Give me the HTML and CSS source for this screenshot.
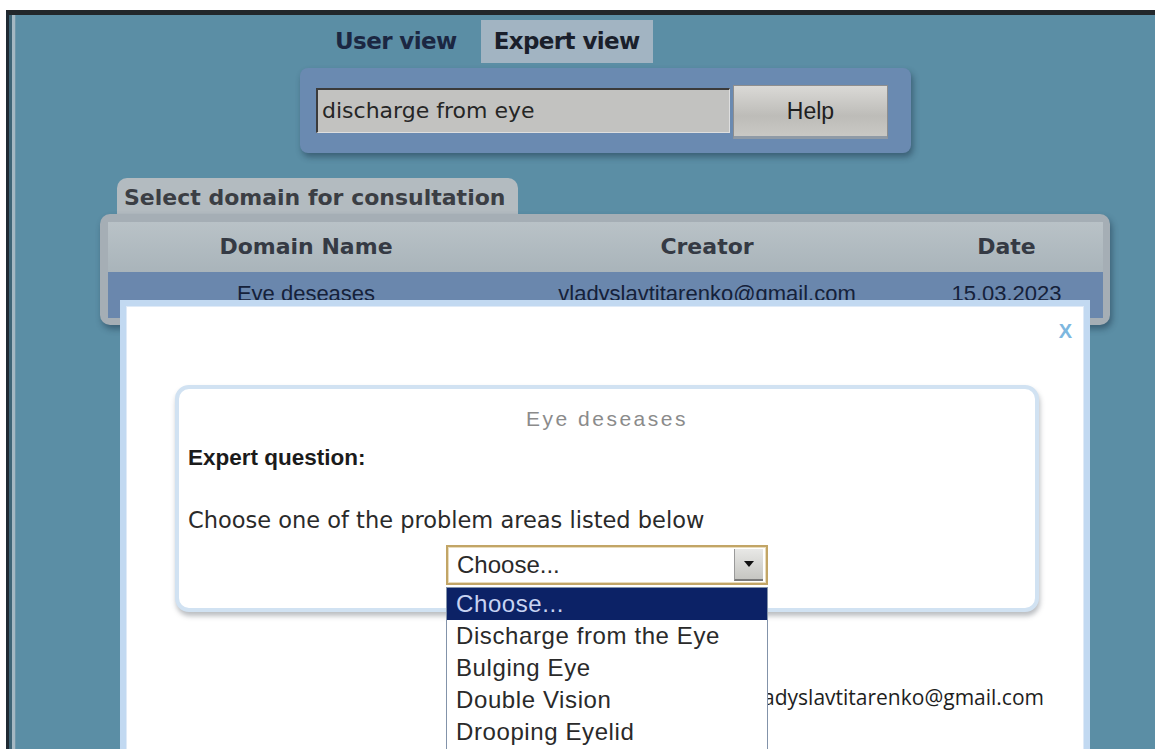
FILE: index.html
```html
<!DOCTYPE html>
<html lang="en">
<head>
<meta charset="utf-8">
<title>Expert system consultation</title>
<link rel="stylesheet" href="styles.css">
</head>
<body>
<div class="screen">
  <div class="desk">
    <div class="tabs">
      <div class="tab">User view</div>
      <div class="tab tab-active">Expert view</div>
    </div>

    <div class="search">
      <div class="search-input">discharge from eye</div>
      <div class="help-btn">Help</div>
    </div>

    <div class="domain-title">Select domain for consultation</div>
    <div class="domain-table">
      <div class="grid-row head">
        <div>Domain Name</div>
        <div>Creator</div>
        <div>Date</div>
      </div>
      <div class="grid-row selected">
        <div>Eye deseases</div>
        <div>vladyslavtitarenko@gmail.com</div>
        <div>15.03.2023</div>
      </div>
    </div>

    <div class="modal">
      <div class="modal-close">X</div>
      <div class="card">
        <div class="card-domain">Eye deseases</div>
        <div class="card-label">Expert question:</div>
        <div class="card-question">Choose one of the problem areas listed below</div>
        <div class="picker">
          <div class="picker-box">
            <span class="picker-value">Choose...</span>
            <span class="picker-arrow">
              <svg width="12" height="8" viewBox="0 0 12 8"><path d="M1 1h10L6 7z" fill="#111"/></svg>
            </span>
          </div>
          <ul class="picker-list">
            <li class="picker-on">Choose...</li>
            <li>Discharge from the Eye</li>
            <li>Bulging Eye</li>
            <li>Double Vision</li>
            <li>Drooping Eyelid</li>
          </ul>
        </div>
      </div>
      <div class="modal-author">vladyslavtitarenko@gmail.com</div>
    </div>
  </div>
</div>
</body>
</html>
```

FILE: styles.css
```css
html, body {
  margin: 0;
  padding: 0;
  background: #ffffff;
}

.screen {
  width: 1155px;
  height: 749px;
  overflow: hidden;
  padding: 10px 0 0 6px;
  box-sizing: border-box;
  background: #ffffff;
}

.desk {
  position: relative;
  height: 100%;
  background: #5b8ea5;
  border-top: 5px solid #22272b;
  border-left: 3px solid #1f2a33;
  box-shadow: inset 3px 0 0 #3e6476, inset 6px 0 0 #a4b8c3, inset 7px 0 0 #6f98ab;
  display: flex;
  flex-direction: column;
  align-items: flex-start;
  font-family: "DejaVu Sans", sans-serif;
}

/* view switcher */
.tabs {
  display: flex;
  gap: 9px;
  margin: 5px 0 0 311px;
  height: 43px;
}

.tab {
  padding: 0 15px;
  line-height: 43px;
  font-weight: bold;
  font-size: 23px;
  color: #1b2742;
  letter-spacing: -0.6px;
}

.tab-active {
  padding: 0 13px;
  background: #a2b4c2;
  color: #1a1f2b;
}

/* search panel */
.search {
  display: flex;
  align-items: center;
  gap: 3px;
  margin: 5px 0 0 291px;
  width: 611px;
  height: 85px;
  padding-left: 16px;
  box-sizing: border-box;
  background: #6a8ab1;
  border-radius: 8px;
  box-shadow: 2px 4px 6px rgba(20, 40, 60, 0.45);
}

.search-input {
  width: 414px;
  height: 45px;
  box-sizing: border-box;
  background: #c2c2c0;
  border-top: 2px solid #3b3b3b;
  border-left: 2px solid #3b3b3b;
  border-right: 1px solid #dedede;
  border-bottom: 1px solid #dedede;
  padding-left: 4px;
  font-size: 22px;
  line-height: 41px;
  color: #262626;
}

.help-btn {
  width: 155px;
  height: 54px;
  box-sizing: border-box;
  background: linear-gradient(#dad9d6, #bdbcb8 60%, #c9c8c4);
  border: 1px solid #8e8e8e;
  border-bottom: 3px solid #8f9aa6;
  text-align: center;
  line-height: 50px;
  font-family: "Liberation Sans", Arial, sans-serif;
  font-size: 23px;
  color: #1e1e1e;
  margin-top: 2px;
}

/* domain list */
.domain-title {
  margin: 25px 0 0 108px;
  width: 401px;
  height: 37px;
  box-sizing: border-box;
  padding-left: 7px;
  background: #b3bbc0;
  border-radius: 10px 10px 0 0;
  font-weight: bold;
  font-size: 22px;
  line-height: 40px;
  color: #3b3e44;
  white-space: nowrap;
}

.domain-table {
  margin: -1px 0 0 91px;
  width: 1010px;
  box-sizing: border-box;
  padding: 8px 7px 7px 8px;
  background: #a5aeb5;
  border-radius: 10px;
  box-shadow: 2px 4px 6px rgba(20, 40, 60, 0.45);
}

.grid-row {
  display: grid;
  grid-template-columns: 396px 406px 193px;
  text-align: center;
  white-space: nowrap;
}

.head {
  height: 50px;
  line-height: 50px;
  background: linear-gradient(#b9c2c7, #a9b4ba);
  font-weight: bold;
  font-size: 22px;
  color: #353a44;
}

.selected {
  height: 46px;
  line-height: 44px;
  background: #6a87ad;
  font-family: "Liberation Sans", Arial, sans-serif;
  font-size: 22px;
  color: #15213a;
}

/* consultation dialog */
.modal {
  position: absolute;
  left: 111px;
  top: 285px;
  width: 970px;
  height: 520px;
  box-sizing: border-box;
  padding-top: 79px;
  background: #ffffff;
  border: 6px solid #c2d9f1;
  box-shadow: inset 0 0 0 1px #dfeaf7;
}

.modal-close {
  position: absolute;
  top: 14px;
  right: 12px;
  font-family: "Liberation Sans", Arial, sans-serif;
  font-weight: bold;
  font-size: 20px;
  color: #7db7df;
}

.card {
  margin: 0 45px 0 49px;
  height: 227px;
  box-sizing: border-box;
  padding: 17px 9px 0;
  border: 4px solid #d1e2f2;
  border-radius: 14px;
  background: #ffffff;
  box-shadow: 1px 4px 5px rgba(60, 70, 80, 0.35);
}

.card-domain {
  text-align: center;
  font-family: "Liberation Sans", Arial, sans-serif;
  font-size: 21px;
  letter-spacing: 2.5px;
  line-height: 26px;
  color: #8b8b8b;
}

.card-label {
  margin-top: 12px;
  font-family: "Liberation Sans", Arial, sans-serif;
  font-weight: bold;
  font-size: 22.5px;
  line-height: 28px;
  color: #1b1b1b;
}

.card-question {
  margin-top: 34px;
  font-size: 22.5px;
  line-height: 28px;
  color: #2a2a2a;
}

.picker {
  position: relative;
  width: 322px;
  margin: 11px auto 0;
}

.picker-box {
  display: flex;
  align-items: center;
  justify-content: space-between;
  height: 40px;
  box-sizing: border-box;
  border: 2px solid #c2a566;
  box-shadow: inset 0 0 0 1px #e9dcbc;
  background: #ffffff;
  padding: 0 3px 0 9px;
  font-family: "Liberation Sans", Arial, sans-serif;
  font-size: 24px;
  color: #2a2a2a;
}

.picker-arrow {
  display: flex;
  align-items: center;
  justify-content: center;
  width: 29px;
  height: 32px;
  background: linear-gradient(#e8e8e6, #c6c6c2);
  border-left: 1px solid #9a9a9a;
  border-bottom: 2px solid #7a7a7a;
  box-sizing: border-box;
}

.picker-list {
  position: absolute;
  top: 42px;
  left: 0;
  width: 322px;
  box-sizing: border-box;
  margin: 0;
  padding: 0 0 10px;
  list-style: none;
  background: #ffffff;
  border: 1px solid #8393aa;
  font-family: "Liberation Sans", Arial, sans-serif;
  font-size: 24px;
  line-height: 32px;
  letter-spacing: 0.6px;
  color: #2a2a2a;
  z-index: 2;
}

.picker-list li {
  padding-left: 9px;
  white-space: nowrap;
}

.picker-list .picker-on {
  background: #0c2266;
  color: #c8d3f2;
}

.modal-author {
  margin-top: 70px;
  padding-right: 40px;
  text-align: right;
  font-family: "Open Sans", sans-serif;
  font-size: 21px;
  line-height: 30px;
  color: #1e1e1e;
}
```
